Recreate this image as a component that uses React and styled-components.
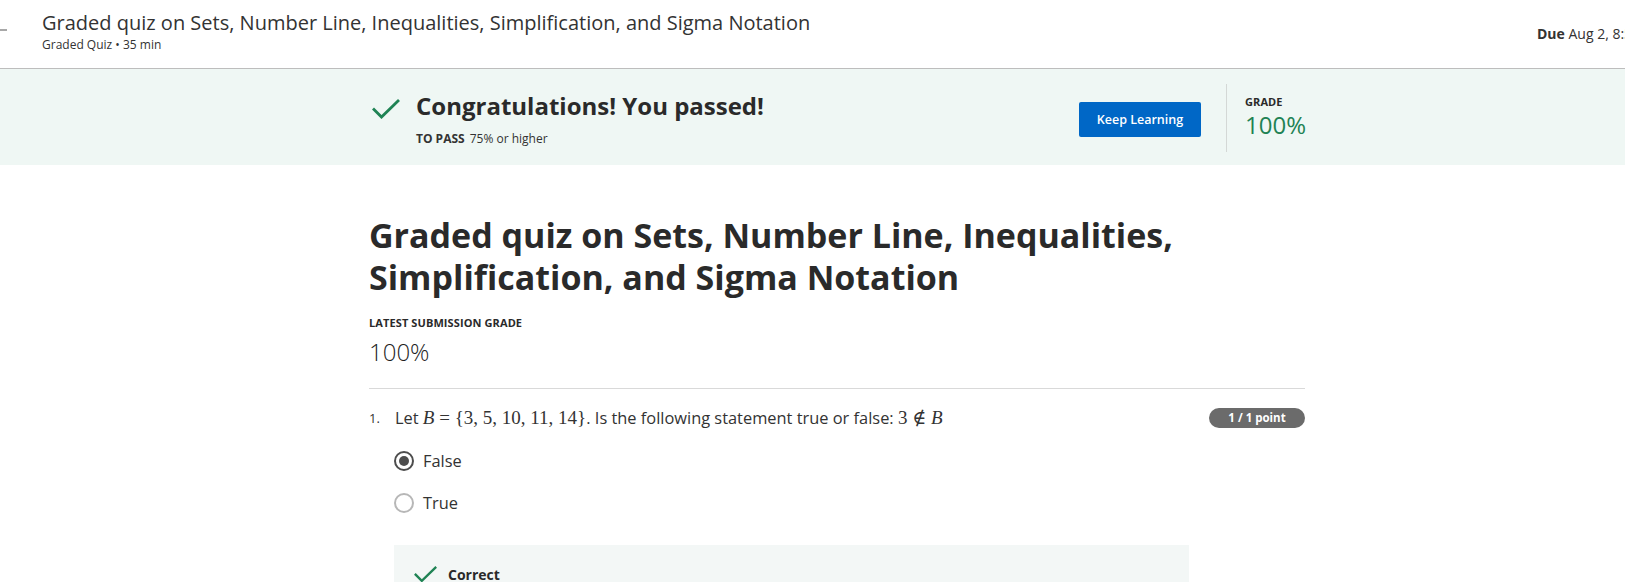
import React from 'react';
import styled, { createGlobalStyle } from 'styled-components';

const GlobalStyle = createGlobalStyle`
  html, body {
    margin: 0;
    padding: 0;
    background: #fff;
    overflow: hidden;
  }
  body {
    font-family: "Open Sans", "Noto Sans", Arial, sans-serif;
    color: #1f1f1f;
  }
`;

const Header = styled.header`
  display: flex;
  align-items: flex-start;
  height: 68px;
  border-bottom: 1px solid #bdbdbd;
  white-space: nowrap;
  overflow: hidden;
`;

const BackIcon = styled.svg`
  flex: 0 0 auto;
  margin: 18px 33px 0 -13px;
  color: #8c8c8c;
`;

const TitleBlock = styled.div`
  flex: 1;
  padding-top: 10px;
`;

const HeaderTitle = styled.div`
  font-size: 20px;
  line-height: 26px;
  color: #333;
`;

const HeaderSub = styled.div`
  font-size: 12px;
  line-height: 18px;
  color: #333;
`;

const DueBox = styled.div`
  flex: 0 0 88px;
  overflow: hidden;
  padding-top: 24px;
  font-size: 14px;
  line-height: 20px;
  color: #333;

  b {
    font-weight: 700;
  }
`;

const Banner = styled.section`
  background: #eff7f4;
  padding: 15px 0 13px;
`;

const Column = styled.div`
  width: 936px;
  margin-left: 369px;
`;

const BannerRow = styled.div`
  display: flex;
  align-items: center;
`;

const PassCheck = styled.span`
  flex: 0 0 auto;
  align-self: flex-start;
  margin: 15px 16px 0 3px;
`;

const PassText = styled.div`
  flex: 1;
`;

const PassTitle = styled.div`
  font-size: 24px;
  font-weight: 700;
  line-height: 34px;
  color: #2a2a2a;
`;

const PassSub = styled.div`
  margin-top: 8px;
  font-size: 12px;
  line-height: 16px;
  color: #333;

  b {
    font-weight: 700;
    margin-right: 5px;
  }
`;

const KeepButton = styled.button`
  width: 122px;
  height: 35px;
  margin-top: 2px;
  border: none;
  border-radius: 2px;
  background: #0067c6;
  color: #fff;
  font-family: inherit;
  font-size: 12.5px;
  font-weight: 600;
  cursor: pointer;
`;

const VDivider = styled.div`
  width: 1px;
  height: 68px;
  margin: 0 18px 0 25px;
  background: #d4d8d6;
`;

const GradeBox = styled.div`
  width: 60px;
  margin-top: -3px;
`;

const SmallCaps = styled.div`
  font-size: 11px;
  font-weight: 700;
  line-height: 16px;
  letter-spacing: 0.1px;
  color: #2a2a2a;
`;

const GradeValue = styled.div`
  margin-top: ${props => props.gap || 0}px;
  font-size: 24px;
  font-weight: ${props => (props.color ? 400 : 300)};
  line-height: 30px;
  color: ${props => props.color || '#1f1f1f'};
`;

const MainTitle = styled.h1`
  margin: 49px 0 0;
  font-size: 34px;
  font-weight: 700;
  line-height: 42px;
  color: #2a2a2a;
`;

const Latest = styled.div`
  margin-top: 17px;
`;

const HRule = styled.hr`
  margin: 21px 0 0;
  border: none;
  border-top: 1px solid #d9d9d9;
`;

const QuestionRow = styled.div`
  display: flex;
  align-items: center;
  margin-top: 17px;
  font-size: 16.4px;
  color: #333;
`;

const QNum = styled.span`
  width: 26px;
  font-size: 13px;
`;

const QText = styled.span`
  flex: 1;
`;

const Math = styled.span`
  font-family: "Liberation Serif", "DejaVu Serif", serif;
  font-size: 19px;

  i {
    font-style: italic;
  }
`;

const PointBadge = styled.span`
  width: 96px;
  height: 20px;
  line-height: 20px;
  border-radius: 10px;
  background: #6b6b6b;
  color: #fff;
  font-size: 11.5px;
  font-weight: 700;
  text-align: center;
`;

const Options = styled.div`
  display: flex;
  flex-direction: column;
  gap: 20px;
  margin: 21px 0 0 25px;
`;

const Option = styled.label`
  display: flex;
  align-items: center;
  gap: 9px;
  font-size: 16.4px;
  line-height: 22px;
  color: #333;
`;

const Radio = styled.span`
  box-sizing: border-box;
  width: 20px;
  height: 20px;
  border-radius: 50%;
  border: 2px solid ${props => (props.checked ? '#4d4d4d' : '#b7b7b7')};
  display: flex;
  align-items: center;
  justify-content: center;

  &::after {
    content: '';
    display: ${props => (props.checked ? 'block' : 'none')};
    width: 10px;
    height: 10px;
    border-radius: 50%;
    background: #4d4d4d;
  }
`;

const Feedback = styled.div`
  width: 795px;
  margin: 31px 0 0 25px;
  padding: 20px 20px 20px;
  background: #f3f7f6;
  box-sizing: border-box;
`;

const FeedbackHead = styled.div`
  display: flex;
  align-items: center;
  gap: 11px;
  font-size: 14px;
  font-weight: 700;
  color: #2a2a2a;
`;

function Check({ size = 28 }) {
  return (
    <svg width={size} height={size * 0.72} viewBox="0 0 28 20" fill="none">
      <path d="M2 10.5 L9.5 18 L26 2" stroke="#1f8354" strokeWidth="2.8" strokeLinecap="square" />
    </svg>
  );
}

export default function App() {
  return (
    <>
      <GlobalStyle />
      <Header>
        <BackIcon width="22" height="24" viewBox="0 0 22 24" fill="none">
          <path d="M4 12 H20 M4 12 L10 6 M4 12 L10 18" stroke="currentColor" strokeWidth="1.6" />
        </BackIcon>
        <TitleBlock>
          <HeaderTitle>Graded quiz on Sets, Number Line, Inequalities, Simplification, and Sigma Notation</HeaderTitle>
          <HeaderSub>Graded Quiz • 35 min</HeaderSub>
        </TitleBlock>
        <DueBox><b>Due</b> Aug 2, 8:59 AM PDT</DueBox>
      </Header>

      <Banner>
        <Column>
          <BannerRow>
            <PassCheck>
              <Check />
            </PassCheck>
            <PassText>
              <PassTitle>Congratulations! You passed!</PassTitle>
              <PassSub><b>TO PASS</b>75% or higher</PassSub>
            </PassText>
            <KeepButton>Keep Learning</KeepButton>
            <VDivider />
            <GradeBox>
              <SmallCaps>GRADE</SmallCaps>
              <GradeValue color="#1f8354">100%</GradeValue>
            </GradeBox>
          </BannerRow>
        </Column>
      </Banner>

      <Column>
        <MainTitle>
          Graded quiz on Sets, Number Line, Inequalities, Simplification, and Sigma Notation
        </MainTitle>
        <Latest>
          <SmallCaps>LATEST SUBMISSION GRADE</SmallCaps>
          <GradeValue gap={6}>100%</GradeValue>
        </Latest>
        <HRule />
        <QuestionRow>
          <QNum>1.</QNum>
          <QText>
            Let <Math><i>B</i> = {'{'}3, 5, 10, 11, 14{'}'}</Math>. Is the following statement true or false: <Math>3 ∉ <i>B</i></Math>
          </QText>
          <PointBadge>1 / 1 point</PointBadge>
        </QuestionRow>
        <Options>
          <Option><Radio checked />False</Option>
          <Option><Radio />True</Option>
        </Options>
        <Feedback>
          <FeedbackHead>
            <Check size={23} />
            Correct
          </FeedbackHead>
        </Feedback>
      </Column>
    </>
  );
}
